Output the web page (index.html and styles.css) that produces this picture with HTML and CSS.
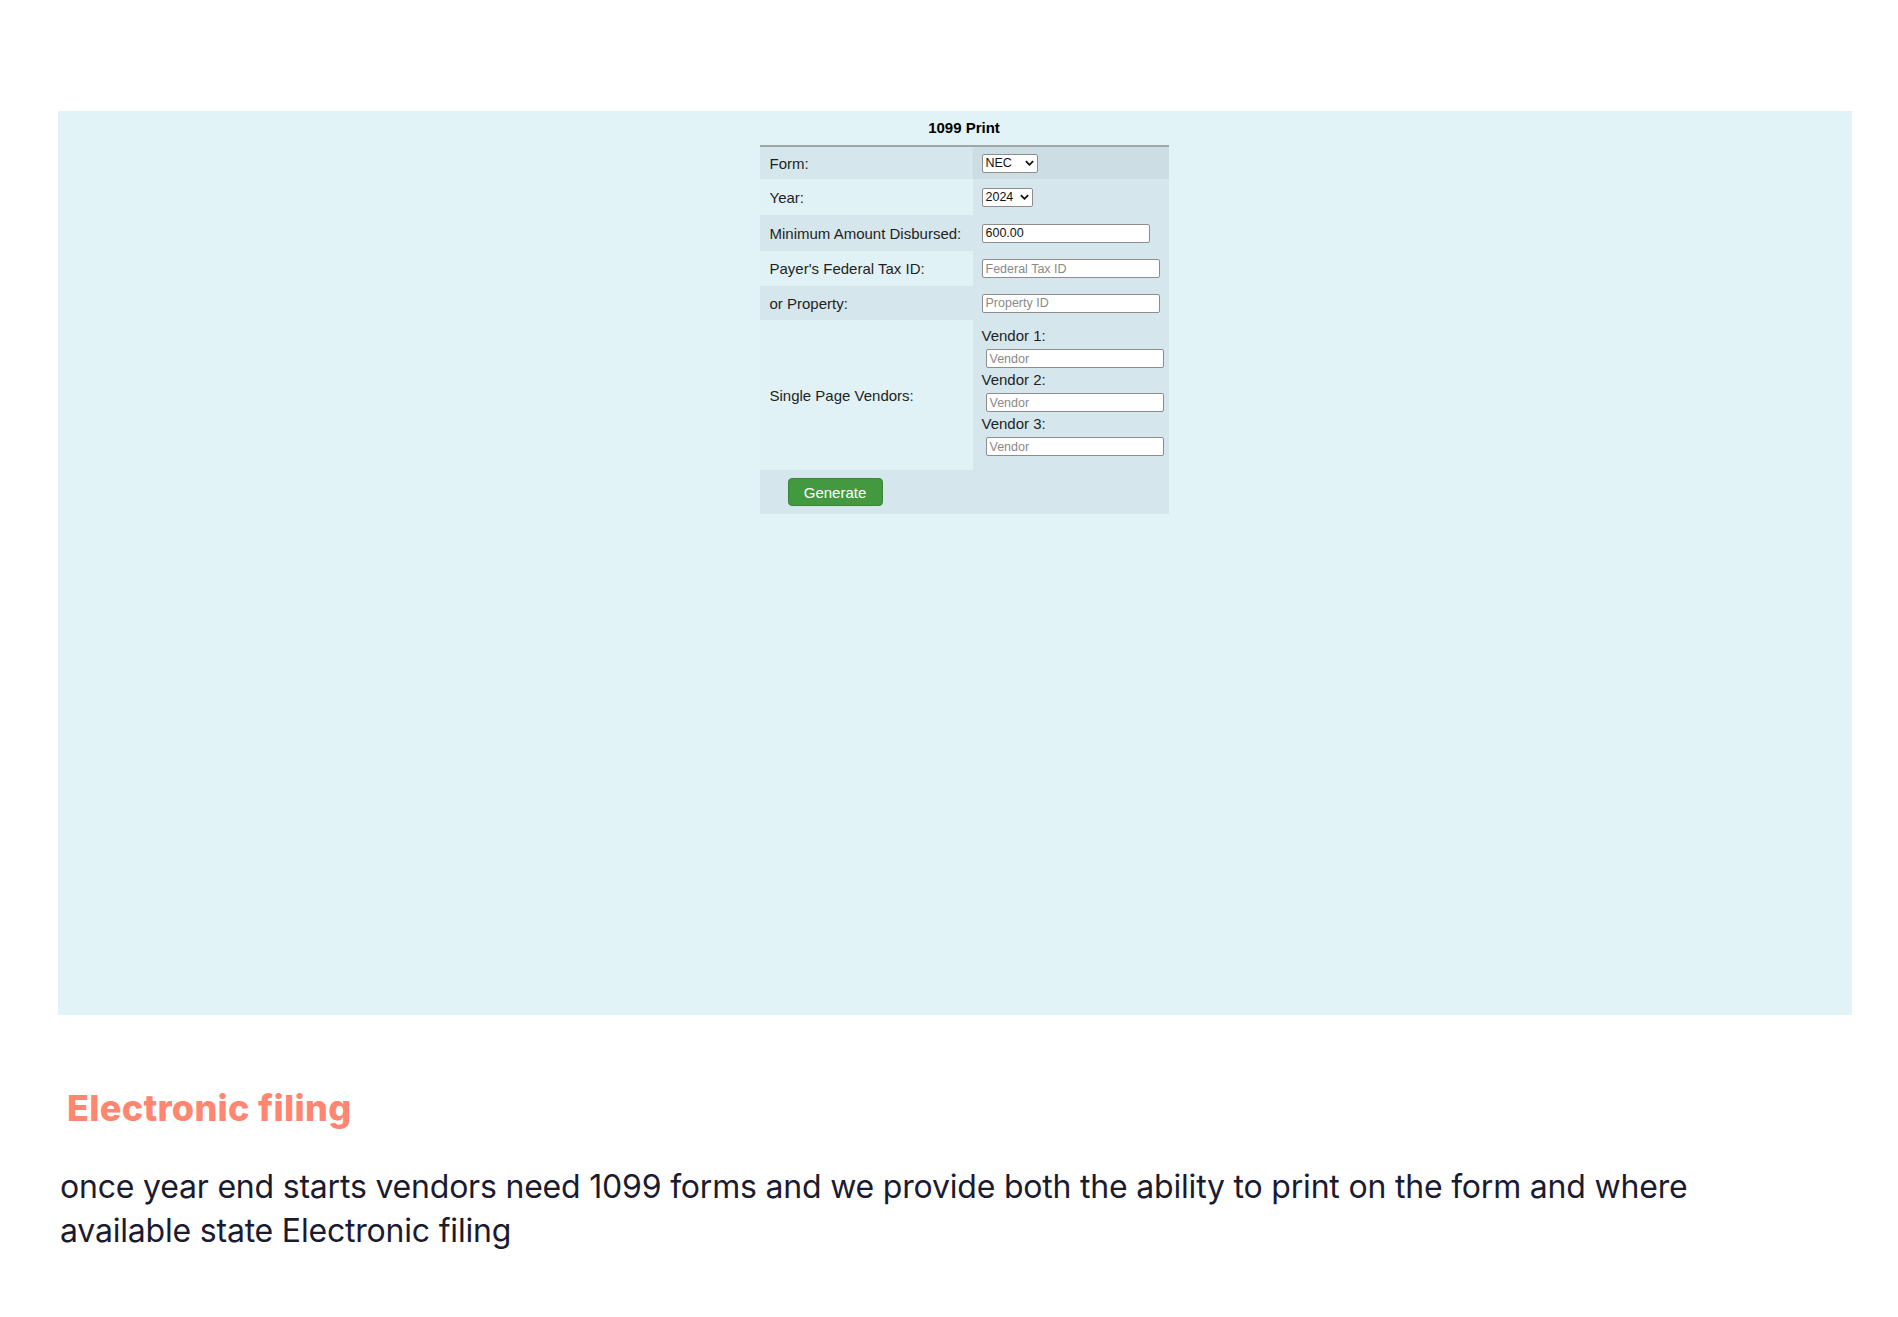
FILE: index.html
```html
<!DOCTYPE html>
<html lang="en">
<head>
<meta charset="utf-8">
<title>1099 Print</title>
<link rel="stylesheet" href="styles.css">
</head>
<body>
<div class="page">
  <section class="shot">
    <div class="form-title">1099 Print</div>
    <table class="print-table">
      <tr class="r-form">
        <td class="lbl">Form:</td>
        <td class="val"><span class="sel sel-nec">NEC<svg class="chev" viewBox="0 0 10 6"><path d="M1 1l4 4 4-4" fill="none" stroke="#111" stroke-width="2"/></svg></span></td>
      </tr>
      <tr class="r-year">
        <td class="lbl">Year:</td>
        <td class="val"><span class="sel sel-year">2024<svg class="chev" viewBox="0 0 10 6"><path d="M1 1l4 4 4-4" fill="none" stroke="#111" stroke-width="2"/></svg></span></td>
      </tr>
      <tr class="r-min">
        <td class="lbl">Minimum Amount Disbursed:</td>
        <td class="val"><span class="inp inp-min">600.00</span></td>
      </tr>
      <tr class="r-tax">
        <td class="lbl">Payer's Federal Tax ID:</td>
        <td class="val"><span class="inp inp-wide ph">Federal Tax ID</span></td>
      </tr>
      <tr class="r-prop">
        <td class="lbl">or Property:</td>
        <td class="val"><span class="inp inp-wide ph">Property ID</span></td>
      </tr>
      <tr class="r-vend">
        <td class="lbl">Single Page Vendors:</td>
        <td class="val vend-cell">
          <div class="vlabel">Vendor 1:</div>
          <span class="inp inp-vend ph">Vendor</span>
          <div class="vlabel">Vendor 2:</div>
          <span class="inp inp-vend ph">Vendor</span>
          <div class="vlabel">Vendor 3:</div>
          <span class="inp inp-vend ph">Vendor</span>
        </td>
      </tr>
      <tr class="r-gen">
        <td colspan="2" class="gen-cell"><span class="btn">Generate</span></td>
      </tr>
    </table>
  </section>

  <h2 class="heading">Electronic filing</h2>
  <p class="body-text">once year end starts vendors need 1099 forms and we provide both the ability to print on the form and where available state Electronic filing</p>
</div>
</body>
</html>
```
FILE: styles.css
```css
html, body {
  margin: 0;
  padding: 0;
  background: #ffffff;
}

.page {
  padding-top: 111px;
  padding-left: 58px;
  font-family: Inter, "Noto Sans", sans-serif;
}

.shot {
  width: 1794px;
  height: 904px;
  background: #e2f3f8;
  display: flex;
  flex-direction: column;
  align-items: center;
  font-family: "Liberation Sans", Arial, sans-serif;
  color: #1a1a1a;
}

.form-title {
  height: 34px;
  line-height: 34px;
  font-size: 15px;
  font-weight: bold;
  color: #000;
  margin-left: 18px;
}

.print-table {
  width: 409px;
  border-collapse: collapse;
  border-top: 2px solid #9ea7aa;
  font-size: 15px;
  margin-left: 18px;
}

.print-table td {
  padding: 0;
  vertical-align: middle;
}

.lbl {
  width: 203px;
  padding-left: 10px !important;
  color: #1f1f1f;
}

.val {
  padding-left: 9px !important;
  background: #d5e6ec;
}

.r-form { height: 33px; }
.r-year { height: 36px; }
.r-min { height: 36px; }
.r-tax { height: 35px; }
.r-prop { height: 34px; }
.r-vend { height: 150px; }
.r-gen { height: 44px; }

.r-form .lbl, .r-min .lbl, .r-prop .lbl { background: #d5e6ec; }
.r-form .val { background: #ccdde3; }
.r-year .lbl, .r-tax .lbl, .r-vend .lbl { background: #e1f2f7; }

.sel, .inp {
  display: inline-flex;
  align-items: center;
  box-sizing: border-box;
  height: 19px;
  background: #fff;
  border: 1px solid #8d8d8d;
  border-radius: 2px;
  font-size: 12.5px;
  color: #111;
  padding-left: 3px;
  vertical-align: middle;
}

.sel-nec { width: 56px; }
.sel-year { width: 51px; }

.chev {
  width: 9px;
  height: 6px;
  margin-left: auto;
  margin-right: 3px;
}

.inp-min { width: 168px; }
.inp-wide { width: 178px; }
.inp-vend { width: 178px; margin-left: 4px; }

.ph { color: #8a8a8a; }

.vend-cell {
  vertical-align: top !important;
  padding-top: 7px !important;
}

.vlabel {
  height: 18px;
  line-height: 18px;
  font-size: 15px;
  color: #1f1f1f;
}

.vend-cell .inp {
  display: flex;
  margin-top: 4px;
  margin-bottom: 3px;
}

.gen-cell {
  background: #d5e6ec;
  padding-left: 28px !important;
}

.btn {
  display: inline-flex;
  align-items: center;
  justify-content: center;
  box-sizing: border-box;
  width: 95px;
  height: 28px;
  background: #43993f;
  border: 1px solid #3a8636;
  border-radius: 4px;
  color: #fff;
  font-size: 15px;
}

.heading {
  margin: 72px 0 0 9px;
  font-size: 36px;
  line-height: 42px;
  font-weight: 800;
  color: #ff8670;
  letter-spacing: 0.3px;
}

.body-text {
  margin: 36px 0 0 2px;
  width: 1760px;
  font-size: 32px;
  line-height: 44px;
  color: #1b1b30;
  letter-spacing: -0.2px;
}
```
